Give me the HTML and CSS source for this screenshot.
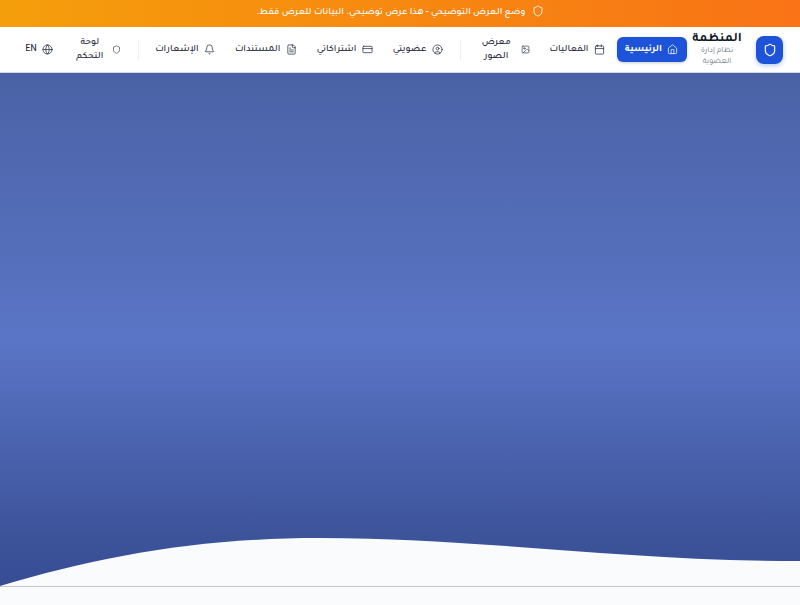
FILE: index.html
```html
<!DOCTYPE html>
<html lang="ar" dir="rtl">
<head>
<meta charset="utf-8">
<title>المنظمة</title>
<link rel="stylesheet" href="styles.css">
</head>
<body>
<div class="banner">
  <svg class="banner-icon" viewBox="0 0 24 24"><path d="M20 13c0 5-3.500 7.500-7.660 8.950a1 1 0 0 1-.67-.01C7.500 20.500 4 18 4 13V6a1 1 0 0 1 1-1c2 0 4.500-1.200 6.240-2.720a1.170 1.170 0 0 1 1.520 0C14.510 3.810 17 5 19 5a1 1 0 0 1 1 1z"/></svg>
  <span>وضع العرض التوضيحي - هذا عرض توضيحي. البيانات للعرض فقط.</span>
</div>
<header class="nav">
  <a class="brand">
    <span class="brand-mark"><svg viewBox="0 0 24 24"><path d="M20 13c0 5-3.500 7.500-7.660 8.950a1 1 0 0 1-.67-.01C7.500 20.500 4 18 4 13V6a1 1 0 0 1 1-1c2 0 4.500-1.200 6.240-2.720a1.170 1.170 0 0 1 1.520 0C14.510 3.810 17 5 19 5a1 1 0 0 1 1 1z"/></svg></span>
    <span class="brand-text"><b>المنظمة</b><small>نظام إدارة العضوية</small></span>
  </a>
  <nav class="links">
    <a class="link active"><svg viewBox="0 0 24 24"><path d="M15 21v-8a1 1 0 0 0-1-1h-4a1 1 0 0 0-1 1v8"/><path d="M3 10a2 2 0 0 1 .709-1.528l7-5.999a2 2 0 0 1 2.582 0l7 5.999A2 2 0 0 1 21 10v9a2 2 0 0 1-2 2H5a2 2 0 0 1-2-2z"/></svg><span>الرئيسية</span></a>
    <a class="link"><svg viewBox="0 0 24 24"><rect x="3" y="4" width="18" height="18" rx="2"/><path d="M3 10h18M8 2v4M16 2v4"/></svg><span>الفعاليات</span></a>
    <a class="link narrow"><svg class="tiny" viewBox="0 0 24 24"><rect x="3" y="3" width="18" height="18" rx="2"/><circle cx="9" cy="9" r="2"/><path d="m21 15-3.086-3.086a2 2 0 0 0-2.828 0L6 21"/></svg><span>معرض الصور</span></a>
    <i class="sep"></i>
    <a class="link"><svg viewBox="0 0 24 24"><circle cx="12" cy="12" r="10"/><circle cx="12" cy="10" r="3"/><path d="M7 20.662V19a2 2 0 0 1 2-2h6a2 2 0 0 1 2 2v1.662"/></svg><span>عضويتي</span></a>
    <a class="link"><svg viewBox="0 0 24 24"><rect x="2" y="5" width="20" height="14" rx="2"/><path d="M2 10h20"/></svg><span>اشتراكاتي</span></a>
    <a class="link"><svg viewBox="0 0 24 24"><path d="M15 2H6a2 2 0 0 0-2 2v16a2 2 0 0 0 2 2h12a2 2 0 0 0 2-2V7Z"/><path d="M14 2v4a2 2 0 0 0 2 2h4M10 9H8M16 13H8M16 17H8"/></svg><span>المستندات</span></a>
    <a class="link"><svg viewBox="0 0 24 24"><path d="M10.268 21a2 2 0 0 0 3.464 0"/><path d="M3.262 15.326A1 1 0 0 0 4 17h16a1 1 0 0 0 .74-1.673C19.410 13.956 18 12.499 18 8A6 6 0 0 0 6 8c0 4.499-1.411 5.956-2.738 7.326"/></svg><span>الإشعارات</span></a>
    <i class="sep"></i>
    <a class="link narrow slim"><svg class="tiny" viewBox="0 0 24 24"><path d="M20 13c0 5-3.500 7.500-7.660 8.950a1 1 0 0 1-.67-.01C7.500 20.500 4 18 4 13V6a1 1 0 0 1 1-1c2 0 4.500-1.200 6.240-2.720a1.170 1.170 0 0 1 1.520 0C14.510 3.810 17 5 19 5a1 1 0 0 1 1 1z"/></svg><span>لوحة التحكم</span></a>
    <a class="link lang"><svg viewBox="0 0 24 24"><circle cx="12" cy="12" r="10"/><path d="M12 2a14.500 14.500 0 0 0 0 20 14.500 14.500 0 0 0 0-20M2 12h20"/></svg><span>EN</span></a>
  </nav>
</header>
<main class="hero">
  <svg class="wave" viewBox="0 0 800 48" preserveAspectRatio="none"><path d="M0 48C100 18 200 0 320 0C480 0 620 23 800 23V48Z"/></svg>
</main>
<div class="below"></div>
</body>
</html>
```
FILE: styles.css
```css
* { box-sizing: border-box; }
html, body { margin: 0; height: 100%; overflow: hidden; }
body { font-family: "Tajawal", "Inter", sans-serif; background: #fafbfd; color: #1f2937; }
svg { fill: none; stroke: currentColor; stroke-width: 2; stroke-linecap: round; stroke-linejoin: round; flex: none; }
.banner { height: 27px; display: flex; align-items: center; justify-content: center; gap: 6px; padding-bottom: 3px; color: #fff; font-size: 9.800px; font-weight: 500; background: linear-gradient(270deg, #f97316, #f59e0b); }
.banner-icon { width: 12px; height: 12px; stroke-width: 1.800; margin-bottom: 1.500px; }
.nav { height: 46px; display: flex; align-items: center; justify-content: space-between; padding: 0 17px; background: #fff; border-bottom: 1px solid #d5dbe6; }
.brand { display: flex; align-items: center; gap: 14px; }
.brand-mark { width: 27px; height: 28px; border-radius: 8px; display: flex; align-items: center; justify-content: center; background: #1d53d8; color: #fff; box-shadow: 0 2px 5px rgba(29,83,216,.3); }
.brand-mark svg { width: 14px; height: 14px; }
.brand-text { width: 50px; margin-top: 2px; display: flex; flex-direction: column; align-items: center; text-align: center; }
.brand-text b { font-size: 13px; line-height: 13px; color: #111827; white-space: nowrap; }
.brand-text small { font-size: 8px; line-height: 11px; color: #6b7280; }
.links { display: flex; align-items: center; gap: 3.500px; }
.link { display: flex; align-items: center; gap: 5.500px; padding: 5.500px 8.200px; border-radius: 6px; font-size: 9.800px; font-weight: 500; line-height: 14px; color: #1f2937; white-space: nowrap; }
.link svg { width: 11px; height: 11px; stroke-width: 1.600; }
.link svg.tiny { width: 9px; height: 9px; }
.link.active { background: #1d53d8; color: #fff; font-weight: 700; box-shadow: 0 1px 3px rgba(0,0,0,.2); }
.link.narrow span { white-space: normal; width: 38px; text-align: center; }
.link.slim span { width: 33px; }
.sep { width: 1px; height: 20px; background: #eceff3; margin: 0 5px; }
.hero { position: relative; height: 514px; background: linear-gradient(180deg, #4a62a5 0%, #5b75c6 52%, #3d549b 90%, #364c94 100%); border-bottom: 1px solid #c4c6ca; }
.wave { position: absolute; left: 0; right: 0; bottom: 0; width: 100%; height: 48px; stroke: none; fill: #fafbfd; }
.below { height: 18px; }
```
